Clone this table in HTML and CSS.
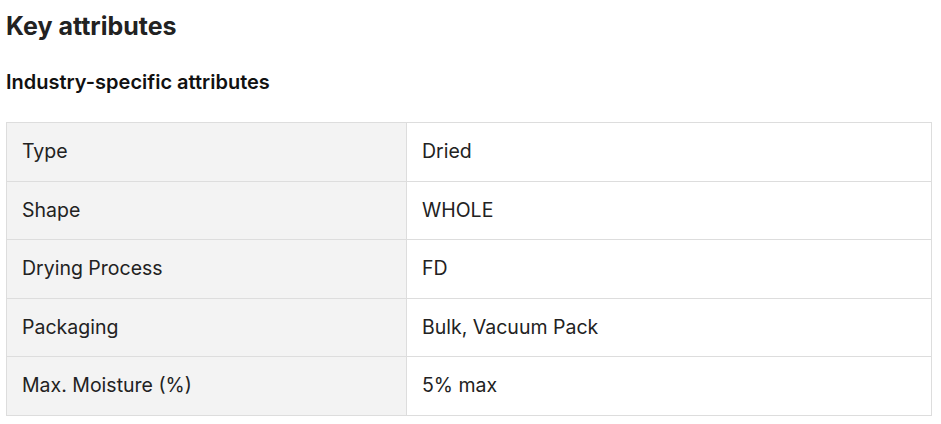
FILE: index.html
```html
<!DOCTYPE html>
<html lang="en">
<head>
<meta charset="utf-8">
<title>Key attributes</title>
<link rel="stylesheet" href="styles.css">
</head>
<body>
<section class="attrs">
  <h1 class="attrs-title">Key attributes</h1>
  <h2 class="attrs-sub">Industry-specific attributes</h2>
  <table class="attrs-table">
    <tbody>
      <tr><th>Type</th><td>Dried</td></tr>
      <tr><th>Shape</th><td>WHOLE</td></tr>
      <tr><th>Drying Process</th><td>FD</td></tr>
      <tr><th>Packaging</th><td>Bulk, Vacuum Pack</td></tr>
      <tr><th>Max. Moisture (%)</th><td>5% max</td></tr>
    </tbody>
  </table>
</section>
</body>
</html>
```
FILE: styles.css
```css
html, body {
  margin: 0;
  padding: 0;
  background: #fff;
}
body {
  font-family: Inter, "Noto Sans", "Liberation Sans", sans-serif;
  color: #222;
}
.attrs {
  padding: 10px 9px 0 6px;
}
.attrs-title {
  margin: 0;
  font-size: 25px;
  line-height: 32px;
  font-weight: 700;
  color: #222;
}
.attrs-sub {
  margin: 28px 0 0;
  font-size: 20px;
  line-height: 24px;
  font-weight: 600;
  color: #111;
}
.attrs-table {
  margin-top: 28px;
  width: 100%;
  border-collapse: collapse;
  font-size: 19.5px;
}
.attrs-table th,
.attrs-table td {
  border: 1px solid #dddddd;
  padding: 16px 15px;
  line-height: 25.6px;
  text-align: left;
  font-weight: 400;
  color: #222;
}
.attrs-table th {
  width: 369px;
  background: #f3f3f3;
}
```
